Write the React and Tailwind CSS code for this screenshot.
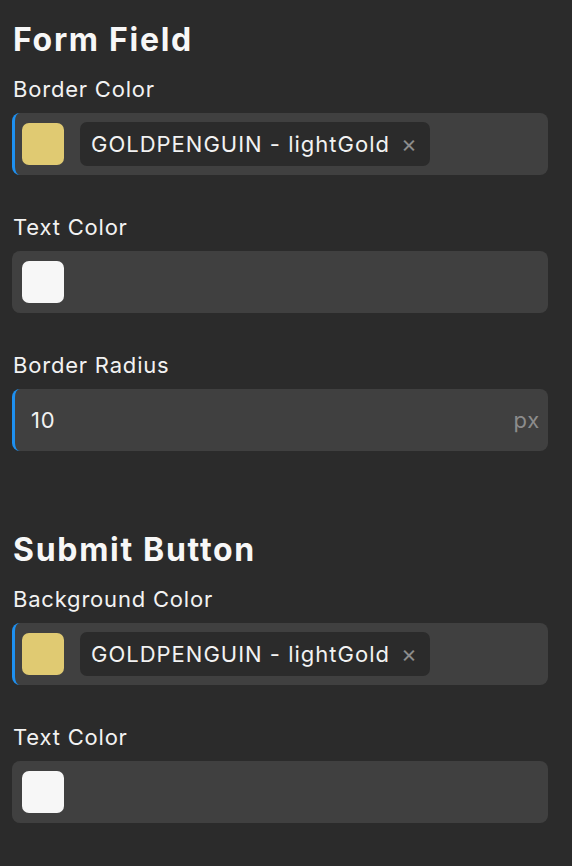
import React from 'react';

const font = { fontFamily: 'Inter, "Noto Sans", sans-serif' };

function Label({ children, first }) {
  return (
    <div className={`${first ? 'mt-[15px]' : 'mt-[38px]'} mb-[10px] px-[1px] text-[22px] leading-[28px] tracking-[0.8px] text-[#f2f2f2]`}>
      {children}
    </div>
  );
}

function Field({ active, children }) {
  return (
    <div
      className={`flex items-center h-[62px] rounded-[8px] bg-[#404040] border-l-[3px] ${active ? 'border-[#1e90f0]' : 'border-[#404040]'}`}
    >
      {children}
    </div>
  );
}

function Swatch({ color }) {
  return <div className={`ml-[7px] w-[42px] h-[42px] rounded-[7px] shrink-0 ${color}`} />;
}

function Chip({ text }) {
  return (
    <div className="ml-[16px] flex items-center h-[44px] w-[350px] rounded-[7px] bg-[#2b2b2b] pl-[11px] pr-[13px] text-[22px] tracking-[1px] text-[#f2f2f2]">
      <span className="flex-1">{text}</span>
      <span className="text-[#8c8c8c] text-[24px] tracking-normal">×</span>
    </div>
  );
}

export default function App() {
  return (
    <div className="min-h-screen w-full bg-[#2b2b2b] pl-[12px] pr-[24px] pt-[20px]" style={font}>
      <h2 className="px-[1px] text-[32px] leading-[40px] tracking-[1.7px] font-bold text-[#f7f7f7]">Form Field</h2>
      <Label first>Border Color</Label>
      <Field active>
        <Swatch color="bg-[#e0ca72]" />
        <Chip text="GOLDPENGUIN - lightGold" />
      </Field>

      <Label>Text Color</Label>
      <Field>
        <Swatch color="bg-[#f7f7f7]" />
      </Field>

      <Label>Border Radius</Label>
      <Field active>
        <span className="pl-[16px] flex-1 text-[22px] tracking-[0.8px] text-[#f2f2f2]">10</span>
        <span className="pr-[8px] text-[22px] tracking-[0.8px] text-[#8c8c8c]">px</span>
      </Field>

      <h2 className="mt-[79px] px-[1px] text-[32px] leading-[40px] tracking-[1.7px] font-bold text-[#f7f7f7]">Submit Button</h2>
      <Label first>Background Color</Label>
      <Field active>
        <Swatch color="bg-[#e0ca72]" />
        <Chip text="GOLDPENGUIN - lightGold" />
      </Field>

      <Label>Text Color</Label>
      <Field>
        <Swatch color="bg-[#f7f7f7]" />
      </Field>
    </div>
  );
}
